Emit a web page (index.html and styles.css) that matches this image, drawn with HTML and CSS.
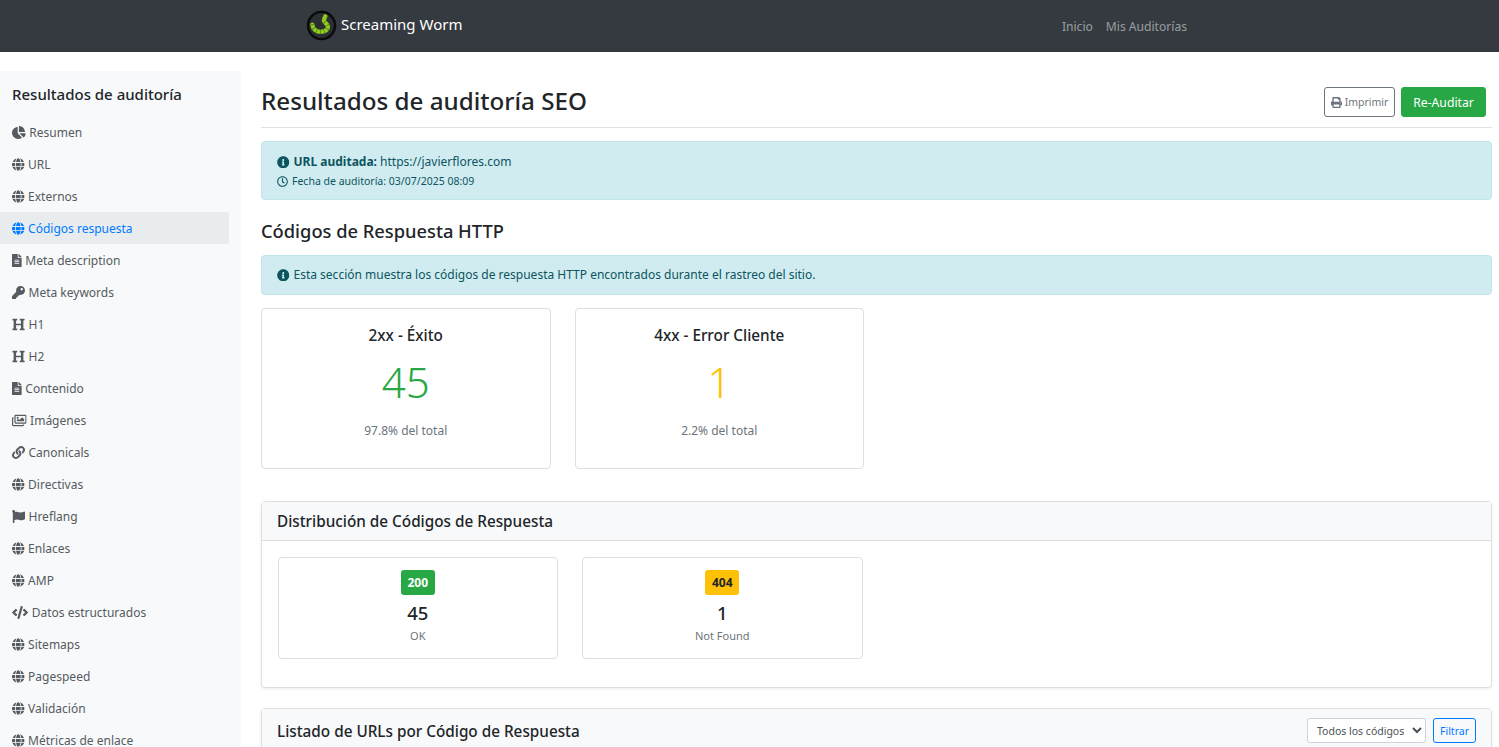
FILE: index.html
```html
<!DOCTYPE html>
<html lang="es">
<head>
    <meta charset="UTF-8">
    <meta name="viewport" content="width=device-width, initial-scale=1.0">
    <title>Resultados de auditoría SEO - Screaming Worm</title>
    <link rel="stylesheet" href="styles.css">
</head>
<body>

    <!-- Icon set -->
    <svg class="icon-defs" aria-hidden="true">
        <symbol id="i-pie" viewBox="0 0 544 512"><path d="M527.79 288H290.5l158.03 158.03c6.04 6.04 15.98 6.53 22.19.68 38.7-36.46 65.32-85.61 73.13-140.86 1.34-9.46-6.51-17.85-16.06-17.85zm-15.83-64.8C503.72 103.74 408.26 8.28 288.8.04 279.68-.59 272 7.1 272 16.24V240h223.77c9.14 0 16.82-7.68 16.19-16.8zM224 288V50.71c0-9.55-8.39-17.4-17.84-16.06C86.99 51.49-4.1 155.6.14 280.37 4.5 408.51 114.83 513.59 243.03 511.98c50.4-.63 96.97-16.87 135.26-44.03 7.9-5.6 8.42-17.23 1.57-24.08L224 288z"/></symbol>
        <symbol id="i-globe" viewBox="0 0 496 512"><path d="M336.5 160C322 70.7 287.8 8 248 8s-74 62.7-88.5 152h177zM152 256c0 22.2 1.2 43.5 3.3 64h185.3c2.1-20.5 3.3-41.8 3.3-64s-1.2-43.5-3.3-64H155.3c-2.1 20.5-3.3 41.8-3.3 64zm324.7-96c-28.6-67.9-86.5-120.4-158-141.6 24.4 33.8 41.2 84.7 50 141.6h108zM177.2 18.4C105.8 39.6 47.8 92.1 19.3 160h108c8.7-56.9 25.5-107.8 49.9-141.6zM487.4 192H372.7c2.1 21 3.3 42.5 3.3 64s-1.2 43-3.3 64h114.6c5.5-20.5 8.6-41.8 8.6-64s-3.1-43.5-8.5-64zM120 256c0-21.5 1.2-43 3.3-64H8.6C3.2 212.5 0 233.8 0 256s3.2 43.5 8.6 64h114.6c-2-21-3.2-42.5-3.2-64zm39.5 96c14.5 89.3 48.7 152 88.5 152s74-62.7 88.5-152h-177zm159.3 141.6c71.4-21.2 129.4-73.7 158-141.6h-108c-8.8 56.9-25.6 107.8-50 141.6zM19.3 352c28.6 67.9 86.5 120.4 158 141.6-24.4-33.8-41.2-84.7-50-141.6h-108z"/></symbol>
        <symbol id="i-file" viewBox="0 0 384 512"><path d="M224 136V0H24C10.7 0 0 10.7 0 24v464c0 13.3 10.7 24 24 24h336c13.3 0 24-10.7 24-24V160H248c-13.2 0-24-10.8-24-24zm64 236c0 6.6-5.4 12-12 12H108c-6.6 0-12-5.4-12-12v-8c0-6.6 5.4-12 12-12h168c6.6 0 12 5.4 12 12v8zm0-64c0 6.6-5.4 12-12 12H108c-6.6 0-12-5.4-12-12v-8c0-6.6 5.4-12 12-12h168c6.6 0 12 5.4 12 12v8zm0-72v8c0 6.6-5.4 12-12 12H108c-6.6 0-12-5.4-12-12v-8c0-6.6 5.4-12 12-12h168c6.6 0 12 5.4 12 12zm96-114.1v6.1H256V0h6.1c6.4 0 12.5 2.5 17 7l97.9 98c4.5 4.5 7 10.6 7 16.9z"/></symbol>
        <symbol id="i-key" viewBox="0 0 512 512"><path d="M512 176.001C512 273.203 433.202 352 336 352c-11.22 0-22.19-1.062-32.827-3.069l-24.012 27.014A23.999 23.999 0 0 1 261.223 384H224v40c0 13.255-10.745 24-24 24h-40v40c0 13.255-10.745 24-24 24H24c-13.255 0-24-10.745-24-24v-78.059c0-6.365 2.529-12.47 7.029-16.971l161.802-161.802C163.108 213.814 160 195.271 160 176 160 78.798 238.797.001 335.999 0 433.488-.001 512 78.511 512 176.001zM336 128c0 26.51 21.49 48 48 48s48-21.49 48-48-21.49-48-48-48-48 21.49-48 48z"/></symbol>
        <symbol id="i-heading" viewBox="0 0 512 512"><path d="M448 96v320h32a16 16 0 0 1 16 16v32a16 16 0 0 1-16 16H320a16 16 0 0 1-16-16v-32a16 16 0 0 1 16-16h32V288H160v128h32a16 16 0 0 1 16 16v32a16 16 0 0 1-16 16H32a16 16 0 0 1-16-16v-32a16 16 0 0 1 16-16h32V96H32a16 16 0 0 1-16-16V48a16 16 0 0 1 16-16h160a16 16 0 0 1 16 16v32a16 16 0 0 1-16 16h-32v128h192V96h-32a16 16 0 0 1-16-16V48a16 16 0 0 1 16-16h160a16 16 0 0 1 16 16v32a16 16 0 0 1-16 16z"/></symbol>
        <symbol id="i-images" viewBox="0 0 576 512"><path d="M480 416v16c0 26.51-21.49 48-48 48H48c-26.51 0-48-21.49-48-48V176c0-26.51 21.49-48 48-48h16v48H54a6 6 0 0 0-6 6v244a6 6 0 0 0 6 6h372a6 6 0 0 0 6-6v-10h48zM522 80H150a6 6 0 0 0-6 6v244a6 6 0 0 0 6 6h372a6 6 0 0 0 6-6V86a6 6 0 0 0-6-6zm6-48c26.51 0 48 21.49 48 48v256c0 26.51-21.49 48-48 48H144c-26.51 0-48-21.49-48-48V80c0-26.51 21.49-48 48-48h384zM264 144c0 22.091-17.909 40-40 40s-40-17.909-40-40 17.909-40 40-40 40 17.909 40 40zm-72 96l39.515-39.515c4.686-4.686 12.284-4.686 16.971 0L288 240l103.515-103.515c4.686-4.686 12.284-4.686 16.971 0L480 208v80H192v-48z"/></symbol>
        <symbol id="i-link" viewBox="0 0 512 512"><path d="M326.612 185.391c59.747 59.809 58.927 155.698.36 214.59-.11.12-.24.25-.36.37l-67.2 67.2c-59.27 59.27-155.699 59.262-214.96 0-59.27-59.26-59.27-155.7 0-214.96l37.106-37.106c9.84-9.84 26.786-3.3 27.294 10.606.648 17.722 3.826 35.527 9.69 52.721 1.986 5.822.567 12.262-3.783 16.612l-13.087 13.087c-28.026 28.026-28.905 73.66-1.155 101.96 28.024 28.579 74.086 28.749 102.325.51l67.2-67.19c28.191-28.191 28.073-73.757 0-101.83-3.701-3.694-7.429-6.564-10.341-8.569a16.037 16.037 0 0 1-6.947-12.606c-.396-10.567 3.348-21.456 11.698-29.806l21.054-21.055c5.521-5.521 14.182-6.199 20.584-1.731a152.482 152.482 0 0 1 20.522 17.197zM467.547 44.449c-59.261-59.262-155.69-59.27-214.96 0l-67.2 67.2c-.12.12-.25.25-.36.37-58.566 58.892-59.387 154.781.36 214.59a152.454 152.454 0 0 0 20.521 17.196c6.402 4.468 15.064 3.789 20.584-1.731l21.054-21.055c8.35-8.35 12.094-19.239 11.698-29.806a16.037 16.037 0 0 0-6.947-12.606c-2.912-2.005-6.64-4.875-10.341-8.569-28.073-28.073-28.191-73.639 0-101.83l67.2-67.19c28.239-28.239 74.3-28.069 102.325.51 27.75 28.3 26.872 73.934-1.155 101.96l-13.087 13.087c-4.35 4.35-5.769 10.79-3.783 16.612 5.864 17.194 9.042 34.999 9.69 52.721.509 13.906 17.454 20.446 27.294 10.606l37.106-37.106c59.271-59.259 59.271-155.699.001-214.959z"/></symbol>
        <symbol id="i-flag" viewBox="0 0 512 512"><path d="M349.565 98.783C295.978 98.783 251.721 64 184.348 64c-24.955 0-47.309 4.384-68.045 12.013a55.947 55.947 0 0 0 3.586-23.562C118.117 24.015 94.806 1.206 66.338.048 34.345-1.254 8 24.296 8 56c0 19.026 9.497 35.825 24 45.945V488c0 13.255 10.745 24 24 24h16c13.255 0 24-10.745 24-24v-94.4c28.311-12.064 63.582-22.122 114.435-22.122 53.588 0 97.844 34.783 165.217 34.783 48.169 0 86.667-16.294 122.505-40.858C506.84 359.452 512 349.571 512 339.045v-243.1c0-23.393-24.269-38.87-45.485-29.016-34.338 15.948-76.454 31.854-116.95 31.854z"/></symbol>
        <symbol id="i-code" viewBox="0 0 640 512"><path d="M278.9 511.5l-61-17.7c-6.4-1.8-10-8.5-8.2-14.9L346.2 8.7c1.8-6.4 8.5-10 14.9-8.2l61 17.7c6.4 1.8 10 8.5 8.2 14.9L293.8 503.3c-1.9 6.4-8.5 10.1-14.9 8.2zm-114-112.2l43.5-46.4c4.6-4.9 4.3-12.7-.8-17.2L117 256l90.6-79.7c5.1-4.5 5.5-12.3.8-17.2l-43.5-46.4c-4.5-4.8-12.1-5.1-17-.5L3.8 247.2c-5.1 4.7-5.1 12.8 0 17.5l144.1 135.1c4.9 4.6 12.5 4.4 17-.5zm327.2.6l144.1-135.1c5.1-4.7 5.1-12.8 0-17.5L492.1 112.1c-4.8-4.5-12.4-4.3-17 .5L431.6 159c-4.6 4.9-4.3 12.7.8 17.2L523 256l-90.6 79.7c-5.1 4.5-5.5 12.3-.8 17.2l43.5 46.4c4.5 4.9 12.1 5.1 17 .6z"/></symbol>
        <symbol id="i-info" viewBox="0 0 512 512"><path d="M256 8C119.043 8 8 119.083 8 256c0 136.997 111.043 248 248 248s248-111.003 248-248C504 119.083 392.957 8 256 8zm0 110c23.196 0 42 18.804 42 42s-18.804 42-42 42-42-18.804-42-42 18.804-42 42-42zm56 254c0 6.627-5.373 12-12 12h-88c-6.627 0-12-5.373-12-12v-24c0-6.627 5.373-12 12-12h12v-64h-12c-6.627 0-12-5.373-12-12v-24c0-6.627 5.373-12 12-12h64c6.627 0 12 5.373 12 12v100h12c6.627 0 12 5.373 12 12v24z"/></symbol>
        <symbol id="i-clock" viewBox="0 0 512 512"><path d="M256 8C119 8 8 119 8 256s111 248 248 248 248-111 248-248S393 8 256 8zm0 448c-110.5 0-200-89.5-200-200S145.5 56 256 56s200 89.5 200 200-89.5 200-200 200zm61.8-104.4l-84.9-61.7c-3.1-2.3-4.9-5.9-4.9-9.7V116c0-6.6 5.4-12 12-12h32c6.6 0 12 5.4 12 12v141.7l66.8 48.6c5.4 3.9 6.5 11.4 2.6 16.8L334.6 349c-3.9 5.3-11.4 6.5-16.8 2.6z"/></symbol>
        <symbol id="i-print" viewBox="0 0 512 512"><path d="M448 192V77.25c0-8.49-3.37-16.62-9.37-22.63L393.37 9.37c-6-6-14.14-9.37-22.63-9.37H96C78.33 0 64 14.33 64 32v160c-35.35 0-64 28.65-64 64v112c0 8.84 7.16 16 16 16h48v96c0 17.67 14.33 32 32 32h320c17.67 0 32-14.33 32-32v-96h48c8.84 0 16-7.16 16-16V256c0-35.35-28.65-64-64-64zm-64 256H128v-96h256v96zm0-224H128V64h192v48c0 8.84 7.16 16 16 16h48v96zm48 72c-13.25 0-24-10.75-24-24 0-13.26 10.75-24 24-24s24 10.74 24 24c0 13.25-10.75 24-24 24z"/></symbol>
    </svg>

    <!-- Navbar -->
    <header class="navbar">
        <a class="brand" href="#">
            <svg class="brand-logo" viewBox="0 0 32 32">
                <circle cx="16" cy="16" r="14" fill="#2b2f33" stroke="#0a0a0a" stroke-width="2.4"/>
                <path d="M6.500 15C7 20 11 22.500 15 22.500C20 22.500 23 20 22.500 17C22 14 19 13 18.500 11C18.500 9 19.500 7.500 20 6.500" fill="none" stroke="#8ecb1c" stroke-width="4.400" stroke-linecap="round"/>
                <path d="M6.500 15C7 20 11 22.500 15 22.500C20 22.500 23 20 22.500 17C22 14 19 13 18.500 11" fill="none" stroke="#3f5c10" stroke-width="4.400" stroke-dasharray="0.5 3.500"/>
            </svg>
            <span class="brand-name">Screaming Worm</span>
        </a>
        <ul class="nav-list">
            <li><a href="#">Inicio</a></li>
            <li><a href="#">Mis Auditorías</a></li>
        </ul>
    </header>

    <div class="layout">

        <!-- Sidebar -->
        <aside class="sidebar">
            <h5 class="sidebar-title">Resultados de auditoría</h5>
            <ul class="side-nav">
                <li><a href="#"><svg class="icon icon-pie"><use href="#i-pie"/></svg>Resumen</a></li>
                <li><a href="#"><svg class="icon icon-globe"><use href="#i-globe"/></svg>URL</a></li>
                <li><a href="#"><svg class="icon icon-globe"><use href="#i-globe"/></svg>Externos</a></li>
                <li><a class="active" href="#"><svg class="icon icon-globe"><use href="#i-globe"/></svg>Códigos respuesta</a></li>
                <li><a href="#"><svg class="icon icon-file"><use href="#i-file"/></svg>Meta description</a></li>
                <li><a href="#"><svg class="icon"><use href="#i-key"/></svg>Meta keywords</a></li>
                <li><a href="#"><svg class="icon"><use href="#i-heading"/></svg>H1</a></li>
                <li><a href="#"><svg class="icon"><use href="#i-heading"/></svg>H2</a></li>
                <li><a href="#"><svg class="icon icon-file"><use href="#i-file"/></svg>Contenido</a></li>
                <li><a href="#"><svg class="icon icon-images"><use href="#i-images"/></svg>Imágenes</a></li>
                <li><a href="#"><svg class="icon"><use href="#i-link"/></svg>Canonicals</a></li>
                <li><a href="#"><svg class="icon icon-globe"><use href="#i-globe"/></svg>Directivas</a></li>
                <li><a href="#"><svg class="icon"><use href="#i-flag"/></svg>Hreflang</a></li>
                <li><a href="#"><svg class="icon icon-globe"><use href="#i-globe"/></svg>Enlaces</a></li>
                <li><a href="#"><svg class="icon icon-globe"><use href="#i-globe"/></svg>AMP</a></li>
                <li><a href="#"><svg class="icon icon-code"><use href="#i-code"/></svg>Datos estructurados</a></li>
                <li><a href="#"><svg class="icon icon-globe"><use href="#i-globe"/></svg>Sitemaps</a></li>
                <li><a href="#"><svg class="icon icon-globe"><use href="#i-globe"/></svg>Pagespeed</a></li>
                <li><a href="#"><svg class="icon icon-globe"><use href="#i-globe"/></svg>Validación</a></li>
                <li><a href="#"><svg class="icon icon-globe"><use href="#i-globe"/></svg>Métricas de enlace</a></li>
            </ul>
        </aside>

        <!-- Main content -->
        <main class="main">
            <div class="page-head">
                <h1>Resultados de auditoría SEO</h1>
                <div class="page-actions">
                    <button class="btn btn-outline" type="button"><svg class="icon"><use href="#i-print"/></svg>Imprimir</button>
                    <button class="btn btn-success" type="button">Re-Auditar</button>
                </div>
            </div>

            <div class="alert alert-audit">
                <p class="alert-url"><svg class="icon"><use href="#i-info"/></svg><strong>URL auditada:</strong> https://javierflores.com</p>
                <p class="alert-date"><svg class="icon"><use href="#i-clock"/></svg>Fecha de auditoría: 03/07/2025 08:09</p>
            </div>

            <h2>Códigos de Respuesta HTTP</h2>

            <div class="alert alert-note">
                <svg class="icon"><use href="#i-info"/></svg>Esta sección muestra los códigos de respuesta HTTP encontrados durante el rastreo del sitio.
            </div>

            <div class="stat-row">
                <div class="stat-card">
                    <h5>2xx - Éxito</h5>
                    <div class="stat-number text-success">45</div>
                    <p>97.8% del total</p>
                </div>
                <div class="stat-card">
                    <h5>4xx - Error Cliente</h5>
                    <div class="stat-number text-warning">1</div>
                    <p>2.2% del total</p>
                </div>
            </div>

            <section class="card card-dist">
                <div class="card-header"><h5>Distribución de Códigos de Respuesta</h5></div>
                <div class="card-body code-row">
                    <div class="code-card">
                        <span class="badge badge-success">200</span>
                        <div class="code-count">45</div>
                        <small>OK</small>
                    </div>
                    <div class="code-card">
                        <span class="badge badge-warning">404</span>
                        <div class="code-count">1</div>
                        <small>Not Found</small>
                    </div>
                </div>
            </section>

            <section class="card">
                <div class="card-header card-header-filter">
                    <h5>Listado de URLs por Código de Respuesta</h5>
                    <form class="filter-form">
                        <select class="filter-select">
                            <option>Todos los códigos</option>
                        </select>
                        <button class="btn-filter" type="button">Filtrar</button>
                    </form>
                </div>
            </section>
        </main>
    </div>

</body>
</html>
```

FILE: styles.css
```css
/* General Styles */
html, body {
    height: 747px;
    overflow: hidden;
}

body {
    margin: 0;
    font-family: "Noto Sans", sans-serif;
    font-size: 13px;
    color: #212529;
    background-color: #fff;
}

a {
    text-decoration: none;
}

h1, h2, h5, p {
    margin: 0;
}

.icon-defs {
    display: none;
}

.icon {
    display: inline-block;
    height: 13px;
    width: 13px;
    fill: currentColor;
    vertical-align: -2px;
}

.icon-pie { width: 13.8px; }
.icon-globe { width: 12.6px; }
.icon-file { width: 9.8px; }
.icon-images { width: 14.6px; }
.icon-code { width: 16.2px; }

/* Navbar */
.navbar {
    height: 52px;
    padding: 0 306px;
    display: flex;
    justify-content: space-between;
    align-items: center;
    background-color: #343a40;
}

.brand {
    display: flex;
    align-items: center;
    gap: 4px;
    color: #fff;
    font-size: 15px;
    margin-top: -2px;
}

.brand-name {
    margin-top: -3px;
}

.brand-logo {
    width: 31px;
    height: 31px;
}

.nav-list {
    list-style: none;
    display: flex;
    margin: 0;
    padding: 0;
}

.nav-list a {
    display: block;
    padding: 0 6.500px;
    color: rgba(255, 255, 255, 0.5);
    font-size: 12.100px;
}

.nav-list li:last-child a {
    padding-right: 6px;
}

/* Layout */
.layout {
    display: flex;
    align-items: flex-start;
}

.sidebar {
    flex: 0 0 241px;
    height: 676px;
    margin-top: 19px;
    padding-top: 13px;
    padding-right: 12px;
    box-sizing: border-box;
    background-color: #f8f9fa;
    overflow: hidden;
}

.sidebar-title {
    padding-left: 12px;
    height: 32px;
    line-height: 20px;
    font-size: 15px;
    font-weight: 500;
}

.side-nav {
    list-style: none;
    margin: 0;
    padding: 0;
}

.side-nav a {
    display: block;
    height: 32px;
    line-height: 34px;
    padding-left: 12px;
    color: #555b61;
    font-size: 12px;
}

.side-nav a .icon {
    margin-right: 3.500px;
}

.side-nav a.active {
    background-color: #e9ecef;
    color: #007bff;
}

.main {
    flex: 1;
    min-width: 0;
    padding: 0 7px 0 20px;
}

/* Page heading */
.page-head {
    height: 76px;
    padding-top: 35px;
    box-sizing: border-box;
    display: flex;
    justify-content: space-between;
    align-items: flex-start;
    border-bottom: 1px solid #dee2e6;
}

.page-head h1 {
    font-size: 24.200px;
    line-height: 28px;
    font-weight: 500;
}

.page-actions {
    display: flex;
    gap: 6px;
    margin-right: 6px;
}

.btn {
    height: 30px;
    border-radius: 3px;
    font-family: inherit;
    cursor: pointer;
}

.btn-outline {
    width: 71px;
    padding: 0;
    background: #fff;
    border: 1px solid #6c757d;
    color: #6c757d;
    font-size: 10.500px;
}

.btn-outline .icon {
    height: 11px;
    width: 11px;
    margin-right: 3px;
}

.btn-success {
    width: 85px;
    padding: 0;
    background-color: #28a745;
    border: 1px solid #28a745;
    color: #fff;
    font-size: 12.200px;
}

/* Alerts */
.alert {
    background-color: #d1ecf1;
    border: 1px solid #bee5eb;
    border-radius: 4px;
    color: #0c5460;
    box-sizing: border-box;
}

.alert-audit {
    height: 59px;
    margin-top: 13px;
    padding: 11px 15px 0;
}

.alert-url {
    font-size: 12px;
    line-height: 18px;
}

.alert-url .icon {
    margin-right: 4px;
    height: 12.500px;
    width: 12.500px;
}

.alert-date {
    margin-top: 2px;
    font-size: 10.500px;
    line-height: 16px;
}

.alert-date .icon {
    height: 11px;
    width: 11px;
    margin-right: 4px;
}

h2 {
    margin-top: 19px;
    height: 36px;
    line-height: 24px;
    font-size: 18.300px;
    font-weight: 500;
}

.alert-note {
    height: 40px;
    line-height: 38px;
    padding-left: 15px;
    font-size: 12px;
}

.alert-note .icon {
    height: 12.500px;
    width: 12.500px;
    margin-right: 4px;
}

/* Stat cards */
.stat-row {
    display: flex;
    gap: 24px;
    margin-top: 13px;
}

.stat-card {
    width: 289.500px;
    height: 161px;
    box-sizing: border-box;
    padding-top: 16px;
    border: 1px solid #dfdfdf;
    border-radius: 4px;
    text-align: center;
}

.stat-card h5 {
    font-size: 15.300px;
    line-height: 20px;
    font-weight: 500;
}

.stat-number {
    margin-top: 9px;
    font-size: 42px;
    line-height: 56px;
    font-weight: 300;
}

.stat-card p {
    margin-top: 12px;
    font-size: 12px;
    line-height: 18px;
    color: #6c757d;
}

.text-success {
    color: #28a745;
}

.text-warning {
    color: #ffc107;
}

/* Cards */
.card {
    border: 1px solid #dfdfdf;
    border-radius: 4px;
    box-shadow: 0 1px 3px rgba(0, 0, 0, 0.08);
    background-color: #fff;
    margin-top: 20px;
}

.card-dist {
    margin-top: 32px;
    height: 187px;
    box-sizing: border-box;
}

.card-header {
    height: 39px;
    box-sizing: border-box;
    padding: 0 15px;
    display: flex;
    align-items: center;
    background-color: #f8f9fa;
    border-bottom: 1px solid #dfdfdf;
}

.card-header h5 {
    font-size: 15.300px;
    font-weight: 500;
}

.card-body {
    padding: 16px 15.500px;
}

.code-row {
    display: flex;
    gap: 24px;
}

.code-card {
    width: 280.500px;
    height: 102px;
    box-sizing: border-box;
    padding-top: 12px;
    border: 1px solid #dfdfdf;
    border-radius: 4px;
    text-align: center;
}

.badge {
    display: inline-block;
    width: 34px;
    height: 25px;
    line-height: 25px;
    border-radius: 3px;
    font-size: 12px;
    font-weight: 700;
}

.badge-success {
    background-color: #28a745;
    color: #fff;
}

.badge-warning {
    background-color: #ffc107;
    color: #212529;
}

.code-count {
    margin-top: 5px;
    font-size: 18.500px;
    line-height: 26px;
    font-weight: 500;
}

.code-card small {
    display: block;
    margin-top: 2px;
    font-size: 11px;
    line-height: 16px;
    color: #6c757d;
}

/* Filter */
.card-header-filter {
    height: 44px;
    justify-content: space-between;
}

.filter-form {
    display: flex;
    gap: 7px;
}

.filter-select {
    width: 119px;
    height: 25px;
    padding: 0 5px;
    font-family: inherit;
    font-size: 10.500px;
    color: #495057;
    background-color: #fff;
    border: 1px solid #ced4da;
    border-radius: 3px;
}

.btn-filter {
    width: 43px;
    height: 25px;
    padding: 0;
    font-family: inherit;
    font-size: 10.500px;
    color: #007bff;
    background: transparent;
    border: 1px solid #007bff;
    border-radius: 3px;
}
```
